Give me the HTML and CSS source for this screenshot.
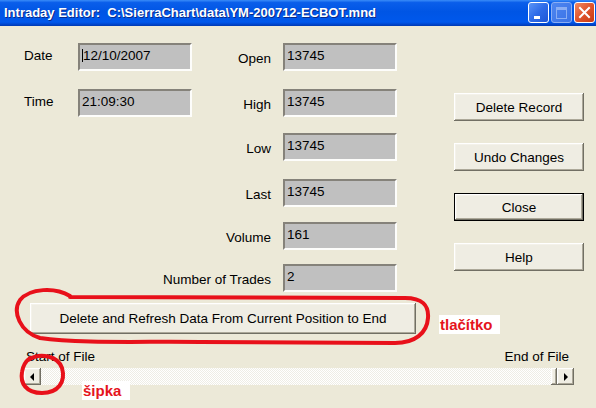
FILE: index.html
```html
<!DOCTYPE html>
<html lang="cs">
<head>
    <meta charset="UTF-8">
    <meta name="viewport" content="width=device-width, initial-scale=1.0">
    <title>Intraday Editor</title>
    <link rel="stylesheet" href="styles.css">
</head>
<body>
    <div class="window">
        <div class="titlebar">
            <span class="title">Intraday Editor:  C:\SierraChart\data\YM-200712-ECBOT.mnd</span>
            <div class="caption-buttons">
                <span class="cap cap-min"></span>
                <span class="cap cap-max disabled"></span>
                <span class="cap cap-close">
                    <svg width="19" height="19" viewBox="0 0 19 19">
                        <path d="M5 5 L14 14 M14 5 L5 14" stroke="#fff" stroke-width="2" stroke-linecap="square"/>
                    </svg>
                </span>
            </div>
        </div>

        <div class="client">
            <div class="top">
                <div class="fields">
                    <label class="lbl left">Date</label>
                    <div class="field"><span class="caret"></span>12/10/2007</div>
                    <label class="lbl right">Open</label>
                    <div class="field">13745</div>

                    <label class="lbl left">Time</label>
                    <div class="field">21:09:30</div>
                    <label class="lbl right">High</label>
                    <div class="field">13745</div>

                    <label class="lbl right col3">Low</label>
                    <div class="field">13745</div>

                    <label class="lbl right col3">Last</label>
                    <div class="field">13745</div>

                    <label class="lbl right col3">Volume</label>
                    <div class="field">161</div>

                    <label class="lbl right col3">Number of Trades</label>
                    <div class="field">2</div>
                </div>

                <div class="actions">
                    <button class="btn">Delete Record</button>
                    <button class="btn">Undo Changes</button>
                    <button class="btn default">Close</button>
                    <button class="btn">Help</button>
                </div>
            </div>

            <div class="bulk">
                <button class="btn wide">Delete and Refresh Data From Current Position to End</button>
            </div>

            <div class="range">
                <span>Start of File</span>
                <span>End of File</span>
            </div>

            <div class="scrollbar">
                <span class="arrow"><span class="tri tri-left"></span></span>
                <span class="track"></span>
                <span class="thumb"></span>
                <span class="arrow"><span class="tri tri-right"></span></span>
            </div>
        </div>

        <!-- red hand-drawn marks -->
        <svg class="marks" width="596" height="408" viewBox="0 0 596 408">
            <path d="M70 296 C55 287, 30 288, 20 300 C12 312, 20 332, 40 338 C80 344, 150 341, 200 342 L395 343 C415 343, 427 333, 428 318 C429 305, 422 298, 405 298 L70 297"/>
            <path d="M28 360 C40 352, 58 356, 62 368 C66 382, 58 393, 42 393 C26 393, 20 383, 22 372 C23 365, 26 361, 30 358"/>
        </svg>
        <span class="note note-button">tlačítko</span>
        <span class="note note-arrow">šipka</span>
    </div>
</body>
</html>
```

FILE: styles.css
```css
body {
    margin: 0;
    background-color: #ECE9D8;
    font-family: "Liberation Sans", Arial, sans-serif;
    font-size: 13.5px;
    color: #000;
}
.window {
    position: relative;
    width: 596px;
    height: 408px;
    overflow: hidden;
}
.titlebar {
    height: 26px;
    box-sizing: border-box;
    display: flex;
    align-items: center;
    justify-content: space-between;
    padding: 0 1px 1px 4px;
    background: linear-gradient(to bottom, #3A8CF8 0%, #0A5EEA 10%, #0055E5 45%, #0058EC 85%, #0043C8 95%, #003AB0 100%);
}
.title {
    color: #fff;
    font-weight: bold;
    font-size: 13px;
    white-space: pre;
    text-shadow: 1px 1px #0A2A8A;
}
.caption-buttons {
    display: flex;
    gap: 2px;
}
.cap {
    position: relative;
    width: 21px;
    height: 21px;
    box-sizing: border-box;
    border: 1px solid #fff;
    border-radius: 3px;
    background: linear-gradient(135deg, #5A94F6 0%, #2D6BE8 50%, #1E56D6 100%);
}
.cap-min::after {
    content: "";
    position: absolute;
    left: 5px;
    top: 13px;
    width: 6px;
    height: 3px;
    background: #fff;
}
.cap-max.disabled {
    border-color: #8AAEF4;
    background: linear-gradient(135deg, #4E86F0 0%, #3A72E6 100%);
}
.cap-max.disabled::after {
    content: "";
    position: absolute;
    left: 4px;
    top: 4px;
    width: 9px;
    height: 8px;
    border: 1px solid #8AAEF4;
    border-top-width: 3px;
}
.cap-close {
    background: linear-gradient(135deg, #F08A64 0%, #E0542C 50%, #C83A14 100%);
}
.cap-close svg {
    display: block;
}

.top {
    display: flex;
    padding: 17px 0 0 24px;
}
.fields {
    display: grid;
    grid-template-columns: 54px 114px 91px 114px;
    grid-template-rows: 46px 44px 46px 43px 42px 28px;
}
.lbl {
    height: 28px;
    display: flex;
    align-items: center;
    white-space: nowrap;
}
.lbl.left {
    padding-bottom: 4px;
    box-sizing: border-box;
}
.lbl.right {
    justify-content: flex-end;
    padding-right: 12px;
    padding-top: 3px;
    box-sizing: border-box;
}
.col3 {
    grid-column: 3;
}
.field {
    height: 28px;
    box-sizing: border-box;
    border: 2px solid;
    border-color: #85827A #FDFDFB #FDFDFB #85827A;
    background-color: #C0C0C0;
    padding: 3px 2px;
    line-height: 15px;
}
.caret {
    display: inline-block;
    width: 0;
    height: 13px;
    border-left: 1px solid #000;
    vertical-align: -2px;
}

.actions {
    display: flex;
    flex-direction: column;
    gap: 22px;
    margin: 50px 0 0 57px;
}
.btn {
    display: block;
    width: 130px;
    height: 28px;
    border: none;
    padding: 0;
    font: inherit;
    color: #000;
    background-color: #EFEDE3;
    box-shadow: inset -1px -1px #716F64, inset 1px 1px #FFFFFF, inset -2px -2px #ACA899, inset 2px 2px #F4F2EA;
}
.btn.default {
    border: 1px solid #000;
}
.bulk {
    padding: 11px 0 0 30px;
}
.btn.wide {
    width: 386px;
    height: 31px;
}

.range {
    display: flex;
    justify-content: space-between;
    padding: 15px 27px 0 26px;
    line-height: 15px;
}
.scrollbar {
    display: flex;
    height: 17px;
    margin: 4px 22px 0 24px;
    background: repeating-conic-gradient(#FFFFFF 0 25%, #EEEDE5 0 50%) 0 0 / 2px 2px;
}
.arrow,
.thumb {
    display: flex;
    align-items: center;
    justify-content: center;
    width: 17px;
    height: 17px;
    box-sizing: border-box;
    background-color: #EFEDE3;
    box-shadow: inset -1px -1px #716F64, inset 1px 1px #FFFFFF, inset -2px -2px #ACA899, inset 2px 2px #F4F2EA;
}
.thumb {
    width: 6px;
}
.track {
    flex: 1;
}
.tri {
    width: 0;
    height: 0;
    border-top: 4px solid transparent;
    border-bottom: 4px solid transparent;
}
.tri-left {
    border-right: 4px solid #000;
    margin-right: 1px;
}
.tri-right {
    border-left: 4px solid #000;
    margin-left: 1px;
}

.marks {
    position: absolute;
    left: 0;
    top: 0;
    pointer-events: none;
}
.marks path {
    fill: none;
    stroke: #E8101A;
    stroke-width: 4;
    stroke-linecap: round;
    stroke-linejoin: round;
}
.note {
    position: absolute;
    background-color: #fff;
    color: #E5141C;
    font-weight: bold;
    font-size: 15px;
    line-height: 19px;
    padding: 0 7px 0 1px;
}
.note-button {
    left: 439px;
    top: 315px;
}
.note-arrow {
    left: 82px;
    top: 381px;
    padding-right: 9px;
}
```
